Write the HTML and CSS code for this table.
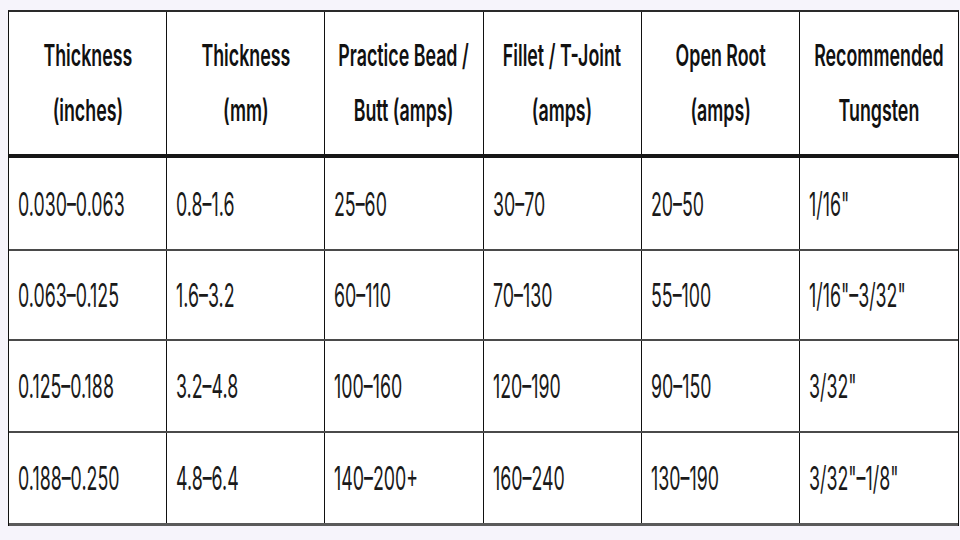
FILE: index.html
```html
<!DOCTYPE html>
<html>
<head>
<meta charset="utf-8">
<link rel="stylesheet" href="styles.css">
</head>
<body>
<div class="table">
  <div class="row head">
    <div class="cell"><span class="h">Thickness<br>(inches)</span></div>
    <div class="cell"><span class="h">Thickness<br>(mm)</span></div>
    <div class="cell"><span class="h">Practice Bead /<br>Butt (amps)</span></div>
    <div class="cell"><span class="h">Fillet / T-Joint<br>(amps)</span></div>
    <div class="cell"><span class="h">Open Root<br>(amps)</span></div>
    <div class="cell"><span class="h">Recommended<br>Tungsten</span></div>
  </div>
  <div class="row r1">
    <div class="cell"><span class="t">0.030–0.063</span></div>
    <div class="cell"><span class="t">0.8–1.6</span></div>
    <div class="cell"><span class="t">25–60</span></div>
    <div class="cell"><span class="t">30–70</span></div>
    <div class="cell"><span class="t">20–50</span></div>
    <div class="cell"><span class="t">1/16"</span></div>
  </div>
  <div class="row r2">
    <div class="cell"><span class="t">0.063–0.125</span></div>
    <div class="cell"><span class="t">1.6–3.2</span></div>
    <div class="cell"><span class="t">60–110</span></div>
    <div class="cell"><span class="t">70–130</span></div>
    <div class="cell"><span class="t">55–100</span></div>
    <div class="cell"><span class="t">1/16"–3/32"</span></div>
  </div>
  <div class="row r3">
    <div class="cell"><span class="t">0.125–0.188</span></div>
    <div class="cell"><span class="t">3.2–4.8</span></div>
    <div class="cell"><span class="t">100–160</span></div>
    <div class="cell"><span class="t">120–190</span></div>
    <div class="cell"><span class="t">90–150</span></div>
    <div class="cell"><span class="t">3/32"</span></div>
  </div>
  <div class="row r4">
    <div class="cell"><span class="t">0.188–0.250</span></div>
    <div class="cell"><span class="t">4.8–6.4</span></div>
    <div class="cell"><span class="t">140–200+</span></div>
    <div class="cell"><span class="t">160–240</span></div>
    <div class="cell"><span class="t">130–190</span></div>
    <div class="cell"><span class="t">3/32"–1/8"</span></div>
  </div>
</div>
</body>
</html>
```

FILE: styles.css
```css
html, body {
  margin: 0;
  padding: 0;
}
body {
  background: #f6f4fb;
  width: 960px;
  height: 540px;
  overflow: hidden;
  font-family: Inter, "Noto Sans", sans-serif;
  color: #1a1a1a;
}
.table {
  margin: 10px 0 0 8px;
  width: 951px;
  box-sizing: border-box;
  background: #fff;
  border-left: 1px solid #111;
  border-right: 1px solid #111;
  border-top: 2px solid #2a2a2a;
}
.row {
  display: grid;
  grid-template-columns: repeat(6, minmax(0, 1fr));
  border-bottom: 2px solid #4a4a4a;
}
.head {
  height: 142px;
  border-bottom: 4px solid #161616;
}
.r1 { height: 91px; }
.r2 { height: 88px; }
.r3 { height: 90px; }
.r4 { height: 90px; border-bottom: 3px solid #5a5a5a; }
.cell {
  min-width: 0;
  border-right: 1px solid #111;
  display: flex;
  align-items: center;
  padding-left: 9px;
  overflow: visible;
  white-space: nowrap;
}
.cell:last-child {
  border-right: none;
}
.head .cell {
  justify-content: center;
  padding-left: 0;
  padding-bottom: 3px;
}
.h {
  display: inline-block;
  text-align: center;
  font-size: 22px;
  font-weight: 600;
  line-height: 40px;
  transform: scale(0.81, 1.375);
  transform-origin: center center;
  color: #111;
}
.t {
  display: inline-block;
  font-size: 22px;
  font-weight: 400;
  transform: scale(0.81, 1.5);
  transform-origin: left center;
  color: #1a1a1a;
}
```
